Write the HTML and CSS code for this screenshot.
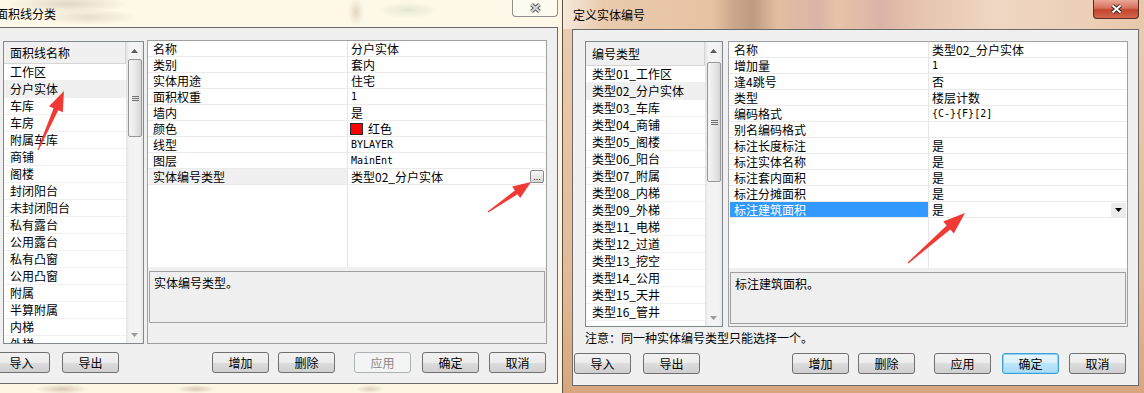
FILE: index.html
```html
<!DOCTYPE html>
<html>
<head>
<title>面积线分类 - 定义实体编号</title>
<meta http-equiv="content-type" content="text/html; charset=UTF-8">
<link rel="stylesheet" href="styles.css">
</head>
<body>
<div class="desk">
	<div class="win win-a">
		<div class="cap cap-a">
			<span class="cap-title">面积线分类</span>
			<span class="cap-close close-off">
				<svg width="15" height="12" viewBox="0 0 15 12"><path d="M3.5 2.5 L11.5 9.5 M11.5 2.5 L3.5 9.5" stroke="#5f5f5f" stroke-width="4.2"/><path d="M3.5 2.5 L11.5 9.5 M11.5 2.5 L3.5 9.5" stroke="#d9d9d9" stroke-width="2"/></svg>
			</span>
		</div>
		<div class="client client-a">
			<div class="panes">
				<div class="list list-a">
					<div class="lcol">
						<div class="lhead">面积线名称</div>
						<div class="lrow">工作区</div>
						<div class="lrow sel">分户实体</div>
						<div class="lrow">车库</div>
						<div class="lrow">车房</div>
						<div class="lrow">附属车库</div>
						<div class="lrow">商铺</div>
						<div class="lrow">阁楼</div>
						<div class="lrow">封闭阳台</div>
						<div class="lrow">未封闭阳台</div>
						<div class="lrow">私有露台</div>
						<div class="lrow">公用露台</div>
						<div class="lrow">私有凸窗</div>
						<div class="lrow">公用凸窗</div>
						<div class="lrow">附属</div>
						<div class="lrow">半算附属</div>
						<div class="lrow">内梯</div>
						<div class="lrow">外梯</div>
					</div>
					<div class="vsb">
						<div class="sb-btn"><svg width="7" height="4" viewBox="0 0 7 4"><path d="M3.5 0 L7 4 L0 4Z" fill="#5c5c5c"/></svg></div>
						<div class="sb-thumb thumb-a"><svg width="7" height="5" viewBox="0 0 7 5"><path d="M0 0.5H7M0 2.5H7M0 4.5H7" stroke="#707070"/></svg></div>
						<div class="sb-track"></div>
						<div class="sb-btn"><svg width="7" height="4" viewBox="0 0 7 4"><path d="M0 0 L7 0 L3.5 4Z" fill="#9a9a9a"/></svg></div>
					</div>
				</div>
				<div class="grid grid-a">
					<div class="prop">
						<div class="prow"><div class="pk">名称</div><div class="pv">分户实体</div></div>
						<div class="prow"><div class="pk">类别</div><div class="pv">套内</div></div>
						<div class="prow"><div class="pk">实体用途</div><div class="pv">住宅</div></div>
						<div class="prow"><div class="pk">面积权重</div><div class="pv mono">1</div></div>
						<div class="prow"><div class="pk">墙内</div><div class="pv">是</div></div>
						<div class="prow"><div class="pk">颜色</div><div class="pv"><span class="swatch"></span>红色</div></div>
						<div class="prow"><div class="pk">线型</div><div class="pv mono">BYLAYER</div></div>
						<div class="prow"><div class="pk">图层</div><div class="pv mono">MainEnt</div></div>
						<div class="prow sel"><div class="pk">实体编号类型</div><div class="pv">类型02_分户实体<span class="dots">...</span></div></div>
					</div>
					<div class="desc">实体编号类型。</div>
				</div>
			</div>
			<div class="btnbar">
				<div class="bl">
					<div class="btn">导入</div>
					<div class="btn">导出</div>
				</div>
				<div class="br">
					<div class="btn">增加</div>
					<div class="btn">删除</div>
					<div class="btn btn-apply disabled">应用</div>
					<div class="btn btn-ok">确定</div>
					<div class="btn btn-cancel">取消</div>
				</div>
			</div>
		</div>
	</div>

	<div class="win win-b">
		<div class="cap cap-b">
			<span class="cap-title">定义实体编号</span>
			<span class="cap-close close-on">
				<svg width="15" height="12" viewBox="0 0 15 12"><path d="M3.5 2.5 L11.5 9.5 M11.5 2.5 L3.5 9.5" stroke="#3a2420" stroke-width="4.2"/><path d="M3.5 2.5 L11.5 9.5 M11.5 2.5 L3.5 9.5" stroke="#ffffff" stroke-width="2"/></svg>
			</span>
		</div>
		<div class="client client-b">
			<div class="panes">
				<div class="list list-b">
					<div class="lcol">
						<div class="lhead">编号类型</div>
						<div class="lrow">类型01_工作区</div>
						<div class="lrow sel">类型02_分户实体</div>
						<div class="lrow">类型03_车库</div>
						<div class="lrow">类型04_商铺</div>
						<div class="lrow">类型05_阁楼</div>
						<div class="lrow">类型06_阳台</div>
						<div class="lrow">类型07_附属</div>
						<div class="lrow">类型08_内梯</div>
						<div class="lrow">类型09_外梯</div>
						<div class="lrow">类型11_电梯</div>
						<div class="lrow">类型12_过道</div>
						<div class="lrow">类型13_挖空</div>
						<div class="lrow">类型14_公用</div>
						<div class="lrow">类型15_天井</div>
						<div class="lrow">类型16_管井</div>
					</div>
					<div class="vsb">
						<div class="sb-btn"><svg width="7" height="4" viewBox="0 0 7 4"><path d="M3.5 0 L7 4 L0 4Z" fill="#5c5c5c"/></svg></div>
						<div class="sb-thumb thumb-b"><svg width="7" height="5" viewBox="0 0 7 5"><path d="M0 0.5H7M0 2.5H7M0 4.5H7" stroke="#707070"/></svg></div>
						<div class="sb-track"></div>
						<div class="sb-btn"><svg width="7" height="4" viewBox="0 0 7 4"><path d="M0 0 L7 0 L3.5 4Z" fill="#9a9a9a"/></svg></div>
					</div>
				</div>
				<div class="grid grid-b">
					<div class="prop">
						<div class="prow"><div class="pk">名称</div><div class="pv">类型02_分户实体</div></div>
						<div class="prow"><div class="pk">增加量</div><div class="pv mono">1</div></div>
						<div class="prow"><div class="pk">逢4跳号</div><div class="pv">否</div></div>
						<div class="prow"><div class="pk">类型</div><div class="pv">楼层计数</div></div>
						<div class="prow"><div class="pk">编码格式</div><div class="pv mono">{C-}{F}[2]</div></div>
						<div class="prow"><div class="pk">别名编码格式</div><div class="pv"></div></div>
						<div class="prow"><div class="pk">标注长度标注</div><div class="pv">是</div></div>
						<div class="prow"><div class="pk">标注实体名称</div><div class="pv">是</div></div>
						<div class="prow"><div class="pk">标注套内面积</div><div class="pv">是</div></div>
						<div class="prow"><div class="pk">标注分摊面积</div><div class="pv">是</div></div>
						<div class="prow hot"><div class="pk">标注建筑面积</div><div class="pv">是<span class="drop"><svg width="7" height="4" viewBox="0 0 7 4"><path d="M0 0H7L3.5 4Z" fill="#000"/></svg></span></div></div>
					</div>
					<div class="desc">标注建筑面积。</div>
				</div>
			</div>
			<div class="notice">注意：同一种实体编号类型只能选择一个。</div>
			<div class="btnbar">
				<div class="bl">
					<div class="btn">导入</div>
					<div class="btn">导出</div>
				</div>
				<div class="br">
					<div class="btn">增加</div>
					<div class="btn">删除</div>
					<div class="btn btn-apply">应用</div>
					<div class="btn btn-ok focus">确定</div>
					<div class="btn btn-cancel">取消</div>
				</div>
			</div>
		</div>
	</div>
</div>

<svg class="marks" width="1144" height="393" viewBox="0 0 1144 393">
	<polygon points="37.5,149.8 53.6,108.3 49.0,106.3 64,91 62.8,112.3 58.2,110.3 38.5,150.2" fill="#f03a36"/>
	<polygon points="487.7,211.5 514.9,190.4 512.2,186.6 531,182 520.2,198 517.5,194.2 488.3,212.5" fill="#f03a36"/>
	<polygon points="907.6,262.5 946.7,225.4 943.2,221.5 965,213 953.8,233.5 950.3,229.6 908.4,263.5" fill="#f03a36"/>
</svg>
</body>
</html>
```

FILE: styles.css
```css
html, body		{ margin:0;padding:0; }
body			{ position:relative;width:1144px;height:393px;overflow:hidden;color:#000;font-family:"Noto Sans CJK SC","Liberation Sans",sans-serif;font-size:12px;line-height:16px;
				  background:radial-gradient(ellipse 26px 5px at 62px 389px,rgba(150,120,95,.35),transparent),radial-gradient(ellipse 20px 4px at 196px 389px,rgba(150,120,95,.35),transparent),radial-gradient(ellipse 14px 4px at 370px 389px,rgba(150,120,95,.3),transparent),#fcf6e2; }
.desk			{ display:flex;align-items:flex-start;height:393px; }
.win			{ flex:none;display:flex;flex-direction:column; }
.win-a			{ width:570px;margin-left:-12px; }
.win-b			{ width:582px;height:393px;margin-left:4px;box-sizing:border-box;border-left:1px solid #5d4e44;background:linear-gradient(#ebcdb0,#e3ba96 70%,#d7a67f); }

/* title bars */
.cap			{ flex:none;display:flex;align-items:flex-start; }
.cap-a			{ height:27px;padding-left:8px;
				  background:radial-gradient(ellipse 60px 9px at 80px 4px,rgba(140,120,100,.25),transparent),radial-gradient(ellipse 50px 8px at 100px 17px,rgba(140,120,100,.2),transparent),radial-gradient(ellipse 8px 14px at 368px 12px,rgba(170,140,110,.3),transparent),radial-gradient(ellipse 30px 8px at 420px 10px,rgba(130,150,130,.18),transparent),#fdf8e7; }
.cap-b			{ height:29px;padding-left:10px;
				  background:linear-gradient(90deg,#f6e8db 0px,#eacbae 40px,#e6c2a2 150px,#c9a68a 172px,#bd9b80 190px,#e2bea1 214px,#dab5a7 256px,#e6c3a8 275px,#dbb4a7 318px,#e6c5ad 360px,#efd7c3 430px,#ecd0b8 520px,#e8c7aa 582px); }
.cap-title		{ margin-top:6px;line-height:16px; }
.cap-b .cap-title	{ margin-top:7px; }
.cap-close		{ margin-left:auto;width:46px;box-sizing:border-box;display:flex;align-items:center;justify-content:center;border-radius:0 0 4px 4px; }
.close-off		{ height:17px;border:1px solid #8f8f8f;border-top:0;background:rgba(255,255,255,.4); }
.close-on		{ height:19px;margin-right:5px;border:1px solid #5a2c24;border-top:0;background:linear-gradient(#e9a796,#d7705b 45%,#c2442d 55%,#d4674d); }

/* client areas */
.client			{ flex:none;box-sizing:border-box;display:flex;flex-direction:column;background:#f0f0f0; }
.client-a		{ height:357px;border-top:1px solid #6a6a6a;border-right:1px solid #6a6a6a;border-bottom:1px solid #6a6a6a; }
.client-b		{ height:357px;margin:0 5px 0 9px;border:1px solid #6a6a6a; }
.panes			{ display:flex;align-items:flex-start; }
.client-a .panes	{ padding:12px 0 0 15px;gap:3px; }
.client-b .panes	{ padding:11px 0 0 12px;gap:5px; }

/* list boxes */
.list			{ flex:none;display:flex;box-sizing:border-box;border:1px solid #828790;background:#fff; }
.list-a			{ width:141px;height:303px;margin-top:1px; }
.list-b			{ width:138px;height:286px; }
.lcol			{ flex:1;min-width:0;overflow:hidden; }
.lhead			{ height:22px;box-sizing:border-box;padding-left:6px;line-height:21px;background:#f0f0f0;border-bottom:1px solid #d5d5d5;border-right:1px solid #d5d5d5; }
.list-b .lhead	{ height:24px;line-height:23px; }
.lrow			{ height:17px;box-sizing:border-box;padding-left:6px;line-height:16px;border-bottom:1px solid #f0f0f0;white-space:nowrap; }
.lrow.sel		{ background:#f0f0f0; }

/* scroll bars */
.vsb			{ flex:none;width:17px;display:flex;flex-direction:column;background:linear-gradient(90deg,#e2e2e2,#f3f3f3 3px,#f3f3f3 14px,#e6e6e6); }
.sb-btn			{ flex:none;height:17px;display:flex;align-items:center;justify-content:center; }
.sb-thumb		{ flex:none;margin:0 1px 0 2px;box-sizing:border-box;border:1px solid #979797;border-radius:2px;background:linear-gradient(90deg,#f5f5f5,#e9e9e9 50%,#d6d6d6);display:flex;align-items:center;justify-content:center; }
.thumb-a		{ height:78px; }
.thumb-b		{ height:120px;margin-top:3px; }
.sb-track		{ flex:1; }

/* property grids */
.grid			{ flex:none;box-sizing:border-box;width:400px;display:flex;flex-direction:column;border:1px solid #a0a0a0;background:#f0f0f0; }
.grid-a			{ height:304px; }
.grid-b			{ height:286px; }
.prop			{ flex:none;height:226px;background:linear-gradient(90deg,transparent 199px,#e6e6e6 199px,#e6e6e6 200px,transparent 200px),#fff; }
.prow			{ display:flex;height:16px;box-sizing:border-box;border-bottom:1px solid #ebebeb; }
.pk				{ flex:none;width:198px;margin-left:1px;padding-left:4px;box-sizing:border-box;line-height:15px;white-space:nowrap; }
.pv				{ flex:1;display:flex;align-items:center;margin-left:1px;padding-left:3px;line-height:15px;white-space:nowrap; }
.prow.sel .pk	{ background:#f0f0f0; }
.prow.hot .pk	{ background:#3399ff;color:#fff; }
.mono			{ font-family:"DejaVu Sans Mono","Liberation Mono",monospace;font-size:10px; }
.swatch			{ flex:none;width:13px;height:12px;box-sizing:border-box;margin:0 5px 0 -1px;border:1px solid #2a2a2a;background:#ff0000; }
.dots			{ flex:none;margin:0 2px 0 auto;width:14px;height:13px;box-sizing:border-box;border:1px solid #8b8b8b;border-radius:2px;background:linear-gradient(#f7f7f7,#dadada);font-family:"Liberation Sans",sans-serif;font-size:9px;line-height:13px;text-align:center; }
.drop			{ flex:none;margin:0 1px 0 auto;width:15px;height:14px;display:flex;align-items:center;justify-content:center;background:#ececec; }
.desc			{ flex:none;height:52px;margin:4px 1px 0;box-sizing:border-box;padding:3px 4px;border:1px solid #a0a0a0;background:#efefef; }
.notice			{ margin-top:3px;padding-left:12px;height:16px;line-height:16px; }

/* buttons */
.btnbar			{ display:flex;align-items:center; }
.client-a .btnbar	{ margin-top:8px;padding:0 11px 0 5px; }
.client-b .btnbar	{ margin-top:7px;padding:0 12px 0 1px; }
.bl				{ display:flex;gap:12px; }
.br				{ display:flex;gap:9px;margin-left:auto; }
.btn			{ box-sizing:border-box;width:57px;height:21px;line-height:19px;text-align:center;border:1px solid #707070;border-radius:3px;background:linear-gradient(#f2f2f2,#ebebeb 50%,#dddddd 50%,#cfcfcf); }
.btn.disabled	{ border-color:#adb2b5;background:#f4f4f4;color:#8a8a8a; }
.btn.focus		{ border-color:#3c9fd8;background:linear-gradient(#e8f6fd,#d8effb 50%,#bde5fa 50%,#a9dbf6);box-shadow:inset 0 0 0 1px #8ed3f5; }
.btn-apply		{ margin-left:10px; }
.btn-ok			{ margin-left:2px; }
.btn-cancel		{ margin-left:1px; }

/* annotation arrows */
.marks			{ position:absolute;left:0;top:0;pointer-events:none; }
```
